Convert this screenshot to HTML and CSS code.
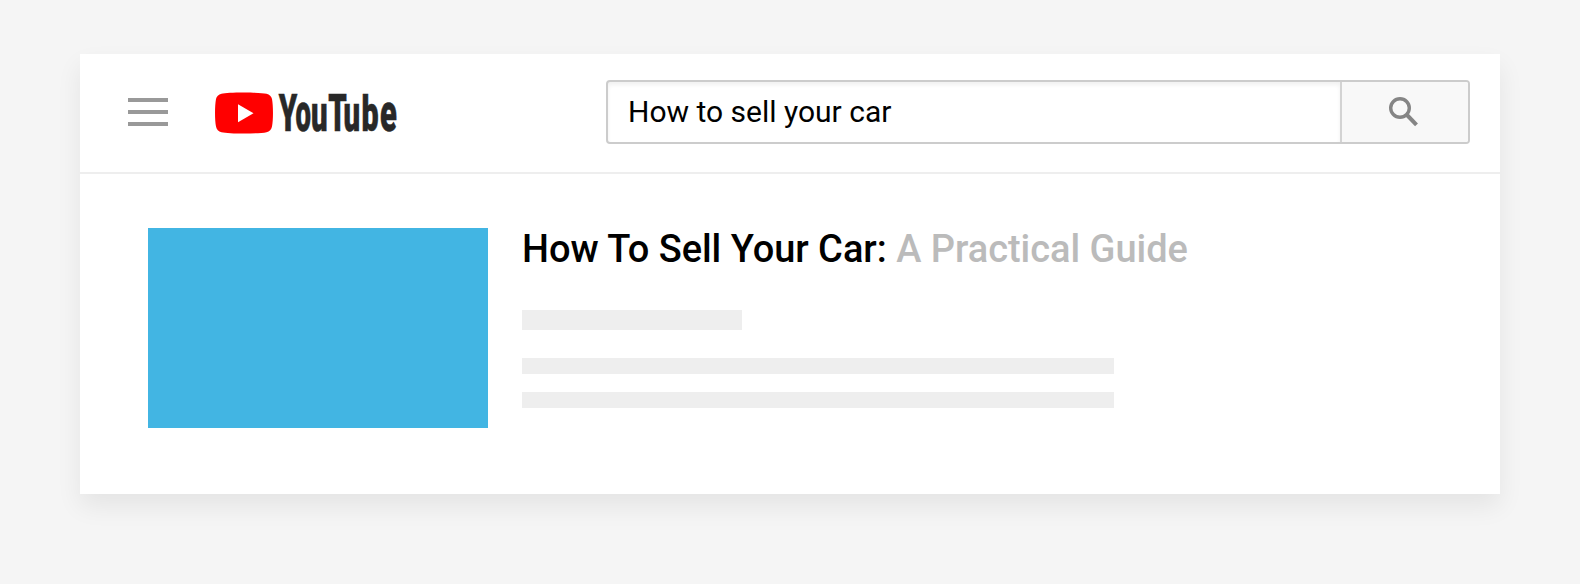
FILE: index.html
```html
<!DOCTYPE html>
<html lang="en">
<head>
<meta charset="utf-8">
<title>How to sell your car - YouTube</title>
<link rel="stylesheet" href="styles.css">
</head>
<body>
<main class="card">
  <header class="header">
    <div class="menu"><span></span><span></span><span></span></div>
    <svg class="logo" width="186" height="48" viewBox="0 0 186 48" role="img" aria-label="YouTube">
      <path fill="#f00" d="M29 3.500C40 3.500 48 4 51.500 4.700C54.500 5.300 56.500 7.500 57 10C58.300 17 58.300 31 57 37.500C56.500 40.500 54.500 42.500 51.500 43.200C44 45 14 45 6.500 43.200C3.500 42.500 1.500 40.500 1 37.500C-.3 31 -.3 17 1 10C1.500 7.500 3.500 5.300 6.500 4.700C10 4 18 3.500 29 3.500Z"/>
      <path fill="#fff" d="M23 15.200v18l15.500-9z"/>
      <g class="wordmark">
        <text transform="translate(63.700 42) scale(.6 1.040)">Y</text>
        <text transform="translate(80.400 42) scale(.56 1.070)">o</text>
        <text transform="translate(95.900 42) scale(.6 1.070)">u</text>
        <text transform="translate(113.200 42) scale(.6 1.040)">T</text>
        <text transform="translate(128.400 42) scale(.6 1.070)">u</text>
        <text transform="translate(146.400 42) scale(.62 1.030)">b</text>
        <text transform="translate(165 42) scale(.63 1.070)">e</text>
      </g>
    </svg>
    <div class="search">
      <div class="query">How to sell your car</div>
      <div class="submit">
        <svg width="32" height="32" viewBox="0 0 32 32" fill="none" stroke="#858585">
          <circle cx="12" cy="12" r="9.300" stroke-width="3.400"/>
          <path d="M19 19l9.500 9.800" stroke-width="4"/>
        </svg>
      </div>
    </div>
  </header>
  <section class="result">
    <div class="thumb"></div>
    <div class="details">
      <h1 class="title">How To Sell Your Car: <span>A Practical Guide</span></h1>
      <div class="bar bar-meta"></div>
      <div class="bar bar-line"></div>
      <div class="bar bar-line bar-last"></div>
    </div>
  </section>
</main>
</body>
</html>
```

FILE: styles.css
```css
* { box-sizing: border-box; }
body {
  margin: 0;
  height: 584px;
  padding: 54px 80px 0;
  overflow: hidden;
  background: #f5f5f5;
  font-family: Roboto, "Liberation Sans", sans-serif;
}
.card {
  height: 440px;
  background: #fff;
  box-shadow: 0 12px 24px rgba(0, 0, 0, .07);
}
.header {
  display: flex;
  align-items: flex-start;
  height: 120px;
  padding-left: 48px;
  border-bottom: 2px solid #eee;
}
.menu {
  display: flex;
  flex-direction: column;
  gap: 8px;
  width: 40px;
  margin-top: 44px;
}
.menu span { height: 4px; background: #999; }
.logo { margin: 35px 0 0 47px; overflow: visible; }
.wordmark {
  fill: #282828;
  stroke: #282828;
  stroke-width: .6px;
  font-size: 49px;
  font-weight: 900;
}
.search {
  display: flex;
  width: 864px;
  height: 64px;
  margin: 26px 0 0 205px;
  border: 2px solid #ccc;
  border-radius: 4px;
  overflow: hidden;
}
.query {
  width: 732px;
  padding-left: 20px;
  font-size: 30px;
  line-height: 60px;
  color: #000;
  box-shadow: inset 0 3px 4px rgba(0, 0, 0, .06);
}
.submit {
  flex: 1;
  padding: 14px 0 0 46px;
  border-left: 2px solid #d3d3d3;
  background: #f8f8f8;
}
.result {
  display: flex;
  gap: 34px;
  padding: 54px 68px;
}
.thumb { width: 340px; height: 200px; background: #42b5e3; }
.title {
  height: 82px;
  margin: 0;
  font-size: 38px;
  font-weight: 500;
  letter-spacing: -.03px;
  line-height: 42px;
  white-space: nowrap;
  color: #000;
}
.title span { color: #bbb; }
.bar { background: #eee; }
.bar-meta { width: 220px; height: 20px; }
.bar-line { width: 592px; height: 16px; margin-top: 28px; }
.bar-last { margin-top: 18px; }
```
